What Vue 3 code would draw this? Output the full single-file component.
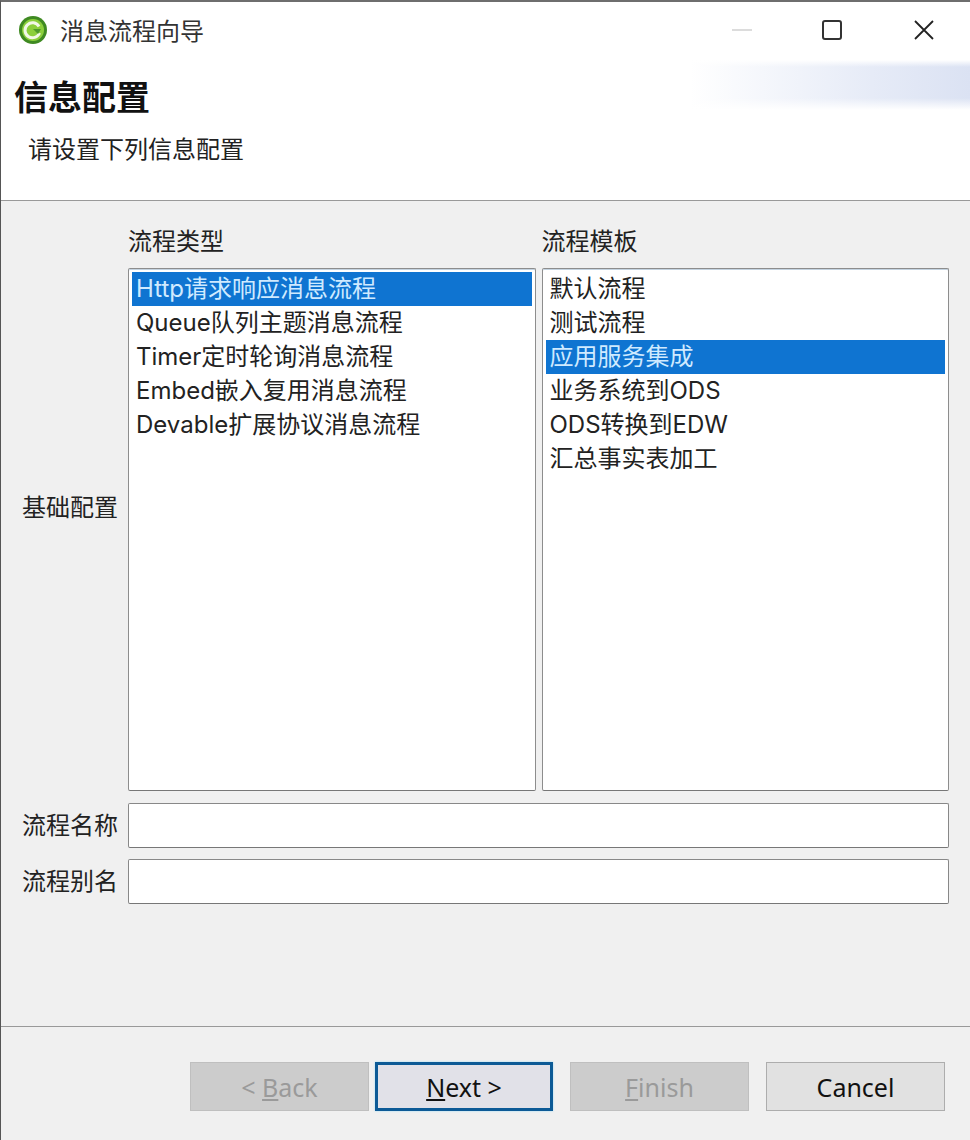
<script setup>
const types = ['Http请求响应消息流程', 'Queue队列主题消息流程', 'Timer定时轮询消息流程', 'Embed嵌入复用消息流程', 'Devable扩展协议消息流程']
const templates = ['默认流程', '测试流程', '应用服务集成', '业务系统到ODS', 'ODS转换到EDW', '汇总事实表加工']
const typeSelected = 0
const templateSelected = 2
</script>

<template>
  <div class="win">
    <div class="titlebar">
      <div class="title">
        <svg class="logo" width="30" height="30" viewBox="0 0 30 30">
          <circle cx="15" cy="15" r="14" fill="#3f8a22" />
          <circle cx="15" cy="15" r="11" fill="#8ccf3c" />
          <path d="M21 11.5A7.5 7.5 0 1 0 21.5 18" fill="none" stroke="#f2f8e8" stroke-width="3" />
          <path d="M15 14h8l-3 5z" fill="#4f9a2a" />
        </svg>
        <span>消息流程向导</span>
      </div>
      <div class="controls">
        <svg width="20" height="20" viewBox="0 0 20 20"><path d="M0 10H20" stroke="#dcdcdc" stroke-width="2" /></svg>
        <svg width="20" height="20" viewBox="0 0 20 20"><rect x="1" y="1" width="18" height="18" rx="2" fill="none" stroke="#333" stroke-width="2" /></svg>
        <svg width="20" height="20" viewBox="0 0 20 20"><path d="M1 1L19 19M19 1L1 19" stroke="#222" stroke-width="1.8" /></svg>
      </div>
    </div>

    <div class="banner">
      <h1>信息配置</h1>
      <p>请设置下列信息配置</p>
    </div>

    <div class="form">
      <div class="label-side">基础配置</div>
      <div class="lists">
        <div class="col">
          <div class="col-title">流程类型</div>
          <ul class="list">
            <li v-for="(t, i) in types" :key="t" :class="{ sel: i === typeSelected }">{{ t }}</li>
          </ul>
        </div>
        <div class="col">
          <div class="col-title">流程模板</div>
          <ul class="list">
            <li v-for="(t, i) in templates" :key="t" :class="{ sel: i === templateSelected }">{{ t }}</li>
          </ul>
        </div>
      </div>

      <label class="label-field">流程名称</label>
      <input class="field" type="text" />
      <label class="label-field">流程别名</label>
      <input class="field" type="text" />
    </div>

    <div class="footer">
      <button class="btn off" disabled>&lt; <u>B</u>ack</button>
      <button class="btn next"><u>N</u>ext &gt;</button>
      <button class="btn off finish" disabled><u>F</u>inish</button>
      <button class="btn cancel">Cancel</button>
    </div>
  </div>
</template>

<style>
html, body {
  margin: 0;
  background: #f0f0f0;
}
</style>

<style scoped>
.win {
  box-sizing: border-box;
  width: 970px;
  height: 1140px;
  display: flex;
  flex-direction: column;
  background: #f0f0f0;
  border-top: 2px solid #6e6e6e;
  border-left: 1px solid #555;
  font-family: "Noto Sans", "Noto Sans CJK SC", sans-serif;
  font-size: 24px;
  color: #222;
  overflow: hidden;
}
.titlebar {
  height: 58px;
  flex: none;
  display: flex;
  align-items: center;
  justify-content: space-between;
  background: #fff;
}
.title {
  display: flex;
  align-items: center;
  gap: 12px;
  padding-left: 17px;
  color: #333;
}
.title span {
  margin-bottom: 4px;
}
.logo {
  flex: none;
  margin-bottom: 2px;
}
.controls {
  display: flex;
  gap: 70px;
  padding-right: 36px;
  margin-top: -3px;
}
.controls svg:last-child {
  margin-left: 2px;
}
.banner {
  box-sizing: border-box;
  height: 141px;
  flex: none;
  padding-left: 13px;
  background-color: #fff;
  background-image:
    linear-gradient(180deg, #fff 0, rgba(255, 255, 255, 0) 14%, rgba(255, 255, 255, 0) 76%, #fff 100%),
    linear-gradient(90deg, rgba(222, 228, 245, 0) 0, #e6ebf7 65%, #dbe2f3 100%);
  background-repeat: no-repeat;
  background-size: 280px 50px;
  background-position: right 0;
  border-bottom: 1px solid #999;
}
.banner h1 {
  margin: 16px 0 0;
  font-size: 34px;
  line-height: 42px;
  font-weight: 700;
  color: #111;
}
.banner p {
  margin: 14px 0 0 14px;
  line-height: 34px;
  color: #222;
}
.form {
  display: grid;
  grid-template-columns: 127px 821px;
  grid-template-rows: 591px 45px 45px;
  row-gap: 11px;
  padding-bottom: 122px;
  border-bottom: 1px solid #999;
}
.label-side,
.label-field {
  display: flex;
  align-items: center;
  padding-left: 21px;
  padding-bottom: 4px;
  white-space: nowrap;
  color: #222;
}
.label-side {
  padding-top: 22px;
}
.lists {
  display: flex;
  gap: 6px;
}
.col {
  width: 408px;
  display: flex;
  flex-direction: column;
}
.col-title {
  height: 67px;
  flex: none;
  box-sizing: border-box;
  padding-top: 23px;
  line-height: 34px;
  color: #222;
}
.list {
  list-style: none;
  margin: 0 0 1px;
  padding: 3px;
  flex: 1;
  font-family: Inter, "Noto Sans CJK SC", sans-serif;
  background: #fff;
  border: 1px solid #8d8d8d;
  border-bottom-color: #777;
  border-radius: 2px;
  box-shadow: inset 0 1px 0 #c4d3e0;
}
.list li {
  height: 34px;
  line-height: 33px;
  padding-left: 4px;
  color: #222;
  white-space: nowrap;
}
.list li.sel {
  background: #0f74d1;
  color: #cfeaff;
}
.field {
  box-sizing: border-box;
  width: 821px;
  height: 45px;
  margin: 0;
  padding: 0;
  background: #fff;
  border: 1px solid #888;
  border-bottom-color: #777;
  border-radius: 2px;
  outline: none;
}
.footer {
  display: flex;
  padding: 35px 0 0 189px;
}
.btn {
  box-sizing: border-box;
  width: 179px;
  height: 49px;
  padding: 0;
  font-family: inherit;
  font-size: 25px;
  color: #111;
  background: #e1e1e1;
  border: 1px solid #adadad;
}
.btn.off {
  background: #ccc;
  border-color: #bfbfbf;
  color: #9a9a9a;
}
.btn.next {
  width: 178px;
  margin-left: 6px;
  background: #e1e1e8;
  border: 3px solid #0c5a96;
  box-shadow: 0 0 2px #9fdcf5;
}
.btn.finish {
  margin-left: 17px;
}
.btn.cancel {
  margin-left: 17px;
}
</style>
